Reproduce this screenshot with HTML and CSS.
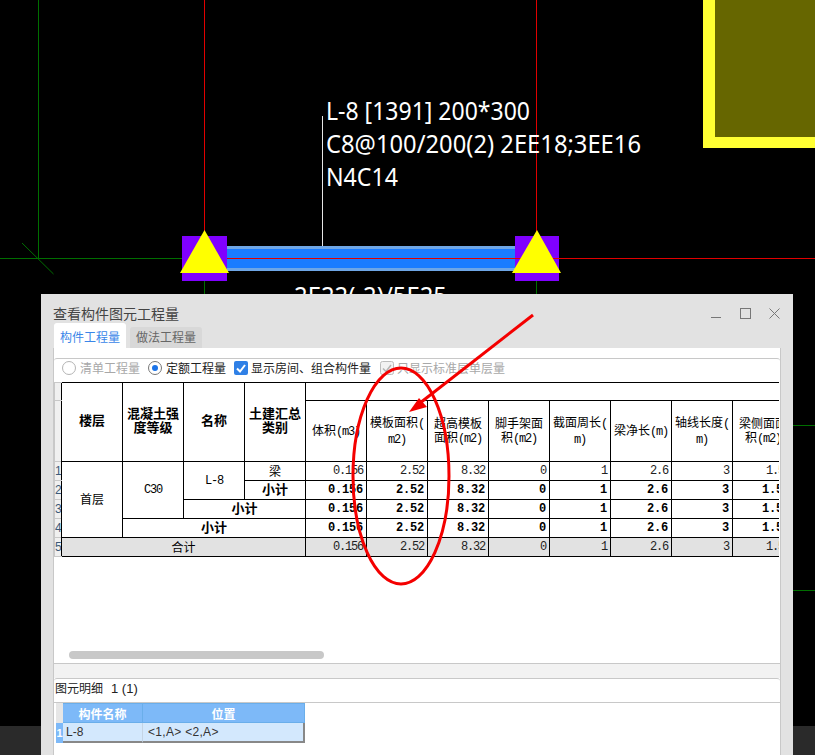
FILE: index.html
```html
<!DOCTYPE html>
<html lang="zh-CN">
<head>
<meta charset="utf-8">
<title>查看构件图元工程量</title>
<link rel="stylesheet" href="styles.css">
</head>
<body>
<div class="stage">
  <svg class="drawing" width="815" height="755" viewBox="0 0 815 755">
    <rect class="k-black" x="0" y="0" width="815" height="755"/>
    <rect class="k-dark" x="0" y="726" width="815" height="29"/>
    <g class="k-green">
      <path d="M38.5 0V258.5M0 258.5H182M22 243L53.500 274M204.500 281V300M536.500 281V300M793 425.500H815M793 590.500H815"/>
    </g>
    <rect class="k-yellow" x="703" y="0" width="112" height="148"/>
    <rect class="k-olive" x="715" y="0" width="100" height="137"/>
    <rect class="k-purple" x="182" y="236" width="45" height="45"/>
    <rect class="k-purple" x="515" y="236" width="44" height="45"/>
    <rect class="k-beam-edge" x="227" y="246" width="288" height="25"/>
    <rect class="k-beam" x="227" y="249" width="288" height="19"/>
    <g class="k-red">
      <path d="M204.500 0V232M536.500 0V232M227 258.500H815"/>
    </g>
    <path class="k-leader" d="M322.500 116V246"/>
    <polygon class="k-tri" points="204.500,230 229,273 180,273"/>
    <polygon class="k-tri" points="537,230 561,273 512,273"/>
    <text class="k-text" x="326" y="120" textLength="204" lengthAdjust="spacingAndGlyphs">L-8 [1391] 200*300</text>
    <text class="k-text" x="326" y="153" textLength="315" lengthAdjust="spacingAndGlyphs">C8@100/200(2) 2EE18;3EE16</text>
    <text class="k-text" x="326" y="186" textLength="72" lengthAdjust="spacingAndGlyphs">N4C14</text>
    <text class="k-text" x="294" y="305" textLength="153" lengthAdjust="spacingAndGlyphs">2E22(-2)/5E25</text>
  </svg>

  <section class="dialog">
    <header class="titlebar">
      <h1 class="title">查看构件图元工程量</h1>
      <div class="controls">
        <svg width="11" height="11" viewBox="0 0 11 11"><path class="ctl" d="M0 9.500H10"/></svg>
        <svg width="11" height="11" viewBox="0 0 11 11"><rect class="ctl" x="0.500" y="0.500" width="10" height="10"/></svg>
        <svg width="11" height="11" viewBox="0 0 11 11"><path class="ctl" d="M0.500 0.500L10.500 10.500M10.500 0.500L0.500 10.500"/></svg>
      </div>
    </header>
    <nav class="tabs">
      <div class="tab tab-on">构件工程量</div>
      <div class="tab tab-off">做法工程量</div>
    </nav>
    <div class="panel">
      <div class="box">
        <div class="options">
          <span class="opt opt-a dim"><i class="radio"></i>清单工程量</span>
          <span class="opt opt-b"><i class="radio radio-on"></i>定额工程量</span>
          <span class="opt opt-c">
            <svg class="check" width="14" height="14" viewBox="0 0 14 14"><rect class="check-bg" width="14" height="14" rx="2"/><path class="check-tick" d="M3 7.500L6 10.500L11 4"/></svg>显示房间、组合构件量</span>
          <span class="opt dim">
            <svg class="check" width="14" height="14" viewBox="0 0 14 14"><rect class="check-off" x="0.500" y="0.500" width="13" height="13" rx="2"/><path class="check-tick-off" d="M3 7.500L6 10.500L11 4"/></svg>只显示标准层单层量</span>
        </div>
        <div class="grid-wrap">
          <table class="grid">
            <colgroup>
              <col class="c-num"><col class="c"><col class="c"><col class="c"><col class="c"><col class="c"><col class="c"><col class="c"><col class="c"><col class="c"><col class="c"><col class="c"><col class="c">
            </colgroup>
            <thead>
              <tr class="h1">
                <th class="rn"></th>
                <th class="hm" rowspan="2">楼层</th>
                <th class="hm" rowspan="2">混凝土强<br>度等级</th>
                <th class="hm" rowspan="2">名称</th>
                <th class="hm" rowspan="2">土建汇总<br>类别</th>
                <th class="blank" colspan="8"></th>
              </tr>
              <tr class="h2">
                <th class="rn"></th>
                <td class="hd">体积<span class="m">(m3)</span></td>
                <td class="hd">模板面积<span class="m">(</span><br><span class="m">m2)</span></td>
                <td class="hd">超高模板<br>面积<span class="m">(m2)</span></td>
                <td class="hd">脚手架面<br>积<span class="m">(m2)</span></td>
                <td class="hd">截面周长<span class="m">(</span><br><span class="m">m)</span></td>
                <td class="hd">梁净长<span class="m">(m)</span></td>
                <td class="hd">轴线长度<span class="m">(</span><br><span class="m">m)</span></td>
                <td class="hd nowrap">梁侧面面<br>积<span class="m">(m2)</span></td>
              </tr>
            </thead>
            <tbody>
              <tr>
                <th class="rn">1</th>
                <td class="t t-floor" rowspan="4">首层</td>
                <td class="t m-c" rowspan="3">C30</td>
                <td class="t m-c" rowspan="2">L-8</td>
                <td class="t">梁</td>
                <td class="v">0.156</td><td class="v">2.52</td><td class="v">8.32</td><td class="v">0</td><td class="v">1</td><td class="v">2.6</td><td class="v">3</td><td class="v">1.56</td>
              </tr>
              <tr class="sub">
                <th class="rn">2</th>
                <td class="t">小计</td>
                <td class="v">0.156</td><td class="v">2.52</td><td class="v">8.32</td><td class="v">0</td><td class="v">1</td><td class="v">2.6</td><td class="v">3</td><td class="v">1.56</td>
              </tr>
              <tr class="sub">
                <th class="rn">3</th>
                <td class="t" colspan="2">小计</td>
                <td class="v">0.156</td><td class="v">2.52</td><td class="v">8.32</td><td class="v">0</td><td class="v">1</td><td class="v">2.6</td><td class="v">3</td><td class="v">1.56</td>
              </tr>
              <tr class="sub">
                <th class="rn">4</th>
                <td class="t" colspan="3">小计</td>
                <td class="v">0.156</td><td class="v">2.52</td><td class="v">8.32</td><td class="v">0</td><td class="v">1</td><td class="v">2.6</td><td class="v">3</td><td class="v">1.56</td>
              </tr>
              <tr class="total">
                <th class="rn">5</th>
                <td class="t" colspan="4">合计</td>
                <td class="v">0.156</td><td class="v">2.52</td><td class="v">8.32</td><td class="v">0</td><td class="v">1</td><td class="v">2.6</td><td class="v">3</td><td class="v">1.56</td>
              </tr>
            </tbody>
          </table>
        </div>
        <div class="scroll-track"><div class="scroll-thumb"></div></div>
      </div>
      <div class="band"></div>
      <div class="detail">
        <div class="detail-title">图元明细<span class="detail-count">1 (1)</span></div>
        <table class="mini">
          <colgroup><col class="mc0"><col class="mc1"><col class="mc2"></colgroup>
          <thead>
            <tr><th class="mini-corner"></th><th>构件名称</th><th>位置</th></tr>
          </thead>
          <tbody>
            <tr><th class="mini-rn">1</th><td>L-8</td><td class="pos">&lt;1,A&gt; &lt;2,A&gt;</td></tr>
          </tbody>
        </table>
      </div>
    </div>
  </section>

  <svg class="marks" width="815" height="755" viewBox="0 0 815 755">
    <ellipse class="mark-line" cx="401" cy="476" rx="48" ry="108"/>
    <path class="mark-line" d="M533 315L420 403"/>
    <polygon class="mark-fill" points="409,412 427,407 419,398"/>
  </svg>
</div>
</body>
</html>
```
FILE: styles.css
```css
* { box-sizing: border-box; }
html, body { margin: 0; padding: 0; background: #000; }
.stage { position: relative; width: 815px; height: 755px; overflow: hidden; background: #000; font-family: "Noto Sans CJK SC", "Liberation Sans", sans-serif; font-size: 12px; }
.drawing { position: absolute; left: 0; top: 0; display: block; }
.marks { position: absolute; left: 0; top: 0; display: block; pointer-events: none; }

.k-black { fill: #000; }
.k-dark { fill: #2a2a2a; }
.k-green path { fill: none; stroke: #006e00; stroke-width: 1; }
.k-red path { fill: none; stroke: #e00000; stroke-width: 1; }
.k-yellow { fill: #ffff33; }
.k-olive { fill: #666600; }
.k-purple { fill: #8000ff; }
.k-beam-edge { fill: #6ea6e6; }
.k-beam { fill: #1a7cff; }
.k-leader { fill: none; stroke: #e6e6e6; stroke-width: 1; }
.k-tri { fill: #ffff00; }
.k-text { fill: #fff; font-family: "Noto Sans", sans-serif; font-size: 26px; }

.mark-line { fill: none; stroke: #f40000; stroke-width: 3; }
.mark-fill { fill: #f40000; }

.dialog { position: absolute; left: 41px; top: 294px; width: 752px; height: 461px; background: #e2e2e2; display: flex; flex-direction: column; }
.titlebar { height: 30px; flex: none; display: flex; align-items: center; justify-content: space-between; padding: 8px 13px 0 12px; }
.title { margin: 0; font-size: 14px; font-weight: 400; color: #444; line-height: 20px; }
.controls { display: flex; gap: 18px; }
.controls svg { display: block; }
.ctl { fill: none; stroke: #777; stroke-width: 1; }

.tabs { height: 24px; flex: none; display: flex; align-items: flex-end; gap: 4px; padding-left: 13px; }
.tab { width: 72px; text-align: center; border-radius: 3px 3px 0 0; line-height: 20px; }
.tab-on { height: 25px; padding-top: 4px; background: #fff; color: #3a86e8; }
.tab-off { height: 21px; padding-top: 0; background: #d8d8d8; color: #666; }

.panel { flex: 1; margin: 0 12px 0 12px; background: #fff; border-left: 1px solid #c8c8c8; border-right: 1px solid #c8c8c8; display: flex; flex-direction: column; min-height: 0; padding-top: 10px; }
.box { height: 306px; flex: none; border-top: 1px solid #c8c8c8; border-radius: 3px 3px 0 0; border-bottom: 1px solid #c8c8c8; display: flex; flex-direction: column; }
.options { height: 23px; flex: none; display: flex; align-items: center; padding: 0 0 6px 8px; color: #222; }
.opt { display: flex; align-items: center; }
.opt-a { width: 86px; }
.opt-b { width: 86px; }
.opt-c { width: 146px; }
.dim { color: #a8a8a8; }
.radio { width: 14px; height: 14px; border-radius: 50%; border: 1px solid #b4b4b4; margin-right: 4px; background: #fff; flex: none; position: relative; }
.radio-on { border-color: #777; }
.radio-on::after { content: ""; position: absolute; left: 3px; top: 3px; width: 6px; height: 6px; border-radius: 50%; background: #1a73e8; }
.check { display: block; margin-right: 3px; flex: none; }
.check-bg { fill: #2f80e6; }
.check-tick { fill: none; stroke: #fff; stroke-width: 2; }
.check-off { fill: #f2f2f2; stroke: #bcbcbc; }
.check-tick-off { fill: none; stroke: #b4b4b4; stroke-width: 1.500; }

.grid-wrap { height: 260px; flex: none; overflow: hidden; width: 725px; }
.grid { border-collapse: collapse; table-layout: fixed; width: 739px; color: #000; }
.c-num { width: 7px; }
.c { width: 61px; }
.grid td, .grid th { border: 1px solid #000; padding: 0; overflow: hidden; }
.h1 { height: 18px; }
.h2 { height: 61px; }
.grid tbody tr { height: 19px; }
.grid th { font-weight: 700; font-size: 13px; line-height: 14px; text-align: center; }
.grid .hm { padding-bottom: 4px; }
.grid .blank { border-bottom: 1px solid #000; border-right: none; }
.grid .rn { border: 1px solid #c8c8c8; border-right: none; background: #f0f0f0; font-family: "Liberation Sans", sans-serif; font-weight: 400; font-size: 12px; line-height: 16px; color: #3c5a78; text-align: left; }
.hd { text-align: center; line-height: 14px; white-space: nowrap; }
.m { font-family: "Liberation Mono", monospace; letter-spacing: -1.200px; }
.m-c { font-family: "Liberation Mono", monospace; letter-spacing: -1.200px; }
.t { text-align: center; line-height: 16px; }
.grid .t-floor { padding-bottom: 2px; }
.v { text-align: right; padding-right: 3px !important; font-family: "Liberation Mono", monospace; letter-spacing: -1.200px; color: #222; line-height: 16px; }
.grid .sub .t { font-weight: 700; font-size: 13px; line-height: 14px; padding-bottom: 3px; }
.sub .v { font-weight: 700; letter-spacing: -0.200px; color: #000; }
.total td { background: #e2e2e2; }

.scroll-track { flex: 1; position: relative; padding: 9px 0 0 15px; }
.scroll-thumb { width: 255px; height: 8px; border-radius: 4px; background: #c8c8c8; }

.band { height: 14px; flex: none; background: #f2f2f2; }
.detail { flex: 1; border-top: 1px solid #c8c8c8; border-radius: 3px 3px 0 0; }
.detail-title { height: 24px; line-height: 18px; padding-left: 1px; color: #222; border-bottom: 1px solid #c8c8c8; }
.detail-count { font-family: "Liberation Sans", sans-serif; font-size: 13px; margin-left: 8px; }
.mini { margin: 0 0 0 2px; border-collapse: separate; border-spacing: 0; table-layout: fixed; width: 249px; }
.mc0 { width: 7px; }
.mc1 { width: 80px; }
.mc2 { width: 162px; }
.mini th, .mini td { padding: 0; }
.mini thead th { height: 20px; background: #7db9f8; color: #fff; font-weight: 700; font-size: 12px; border: 1px solid #6aaeea; border-left: none; }
.mini thead .mini-corner { background: #e6e6e6; border: none; }
.mini tbody td { height: 20px; background: #d3e8fd; color: #333; padding-left: 3px; font-family: "Liberation Sans", sans-serif; font-size: 12px; border-bottom: 2px solid #888; border-right: 1px solid #c4d4e4; }
.mini tbody .pos { padding-left: 5px; letter-spacing: 0.300px; border-right: 2px solid #888; }
.mini-rn { background: #7db9f8; color: #fff; font-family: "Liberation Sans", sans-serif; font-size: 11px; font-weight: 700; overflow: hidden; }
```
